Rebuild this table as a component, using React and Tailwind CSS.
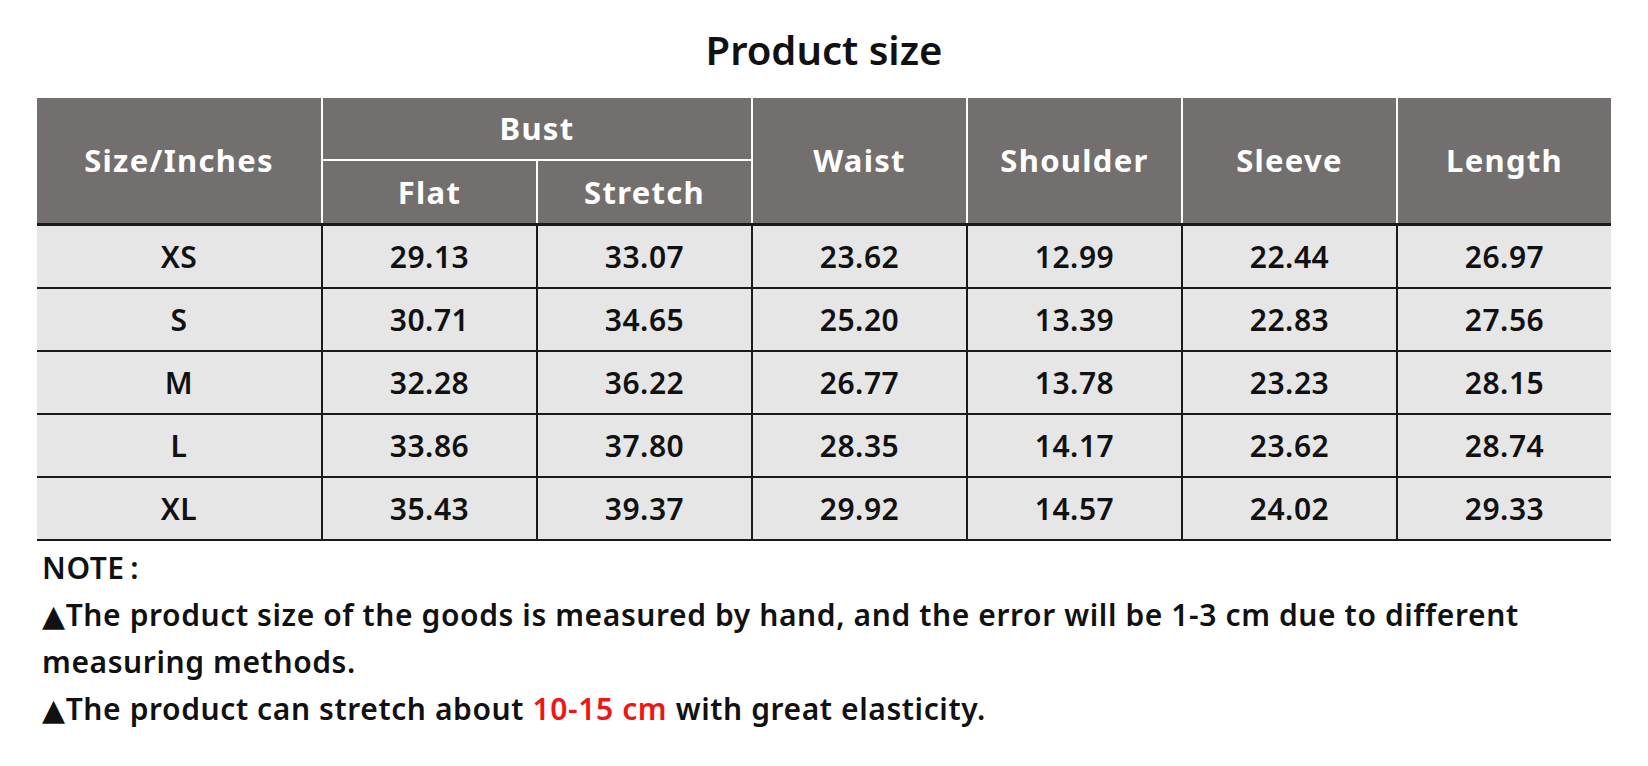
import React from "react";

const rows = [
  ["XS", "29.13", "33.07", "23.62", "12.99", "22.44", "26.97"],
  ["S", "30.71", "34.65", "25.20", "13.39", "22.83", "27.56"],
  ["M", "32.28", "36.22", "26.77", "13.78", "23.23", "28.15"],
  ["L", "33.86", "37.80", "28.35", "14.17", "23.62", "28.74"],
  ["XL", "35.43", "39.37", "29.92", "14.57", "24.02", "29.33"],
];

function H({ children, className = "" }) {
  return (
    <div className={"bg-[#736f6e] flex items-center justify-center text-white font-bold text-[31px] tracking-[1.3px] " + className}>
      {children}
    </div>
  );
}

export default function App() {
  return (
    <div
      className="w-[1648px] h-[766px] bg-white text-[#111] overflow-hidden"
      style={{ fontFamily: '"Noto Sans", "DejaVu Sans", sans-serif' }}
    >
      <h1 className="text-center text-[40px] font-semibold leading-[56px] pt-[22px]">Product size</h1>

      <div className="ml-[37px] w-[1574px] mt-[20px]">
        <div className="grid grid-cols-[284px_repeat(6,1fr)] grid-rows-[61px_62px] gap-[2px] bg-white">
          <H className="row-span-2">Size/Inches</H>
          <H className="col-span-2">Bust</H>
          <H className="row-span-2">Waist</H>
          <H className="row-span-2">Shoulder</H>
          <H className="row-span-2">Sleeve</H>
          <H className="row-span-2">Length</H>
          <H>Flat</H>
          <H>Stretch</H>
        </div>
        <div className="grid grid-cols-[284px_repeat(6,1fr)] auto-rows-[61px] gap-[2px] bg-[#1a1a1a] border-t-[3px] border-b-[2px] border-[#1a1a1a]">
          {rows.map((r) =>
            r.map((c, i) => (
              <div
                key={r[0] + i}
                className="bg-[#e6e6e6] flex items-center justify-center text-[30px] font-semibold tracking-[0.5px] text-[#111]"
              >
                {c}
              </div>
            ))
          )}
        </div>
      </div>

      <div className="ml-[42px] mt-[3px] text-[30px] font-semibold tracking-[0.6px] leading-[47px] text-[#111]">
        <div>NOTE{"\u2009"}:</div>
        <div>▲The product size of the goods is measured by hand, and the error will be 1-3 cm due to different</div>
        <div>measuring methods.</div>
        <div>
          ▲The product can stretch about <span className="text-[#f01515]">10-15 cm</span> with great elasticity.
        </div>
      </div>
    </div>
  );
}
